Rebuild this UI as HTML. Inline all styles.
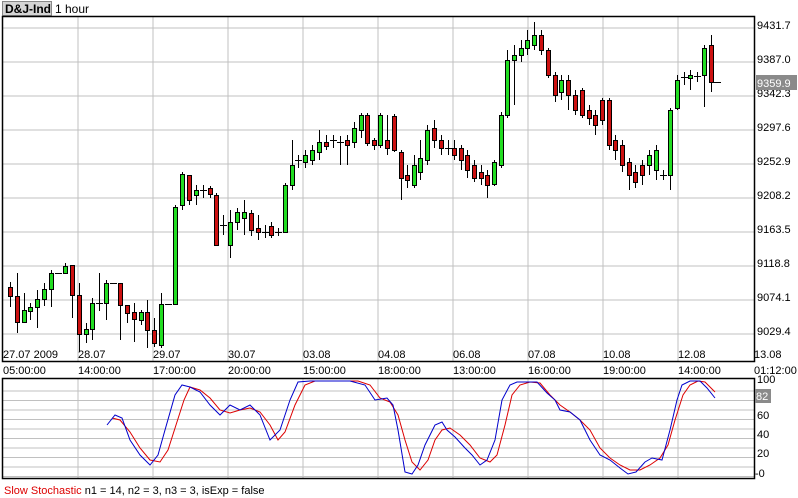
<!DOCTYPE html>
<html><head><meta charset="utf-8"><style>
html,body{margin:0;padding:0;background:#fff;width:798px;height:498px;overflow:hidden;font-family:"Liberation Sans",sans-serif}
svg{position:absolute;left:0;top:0}
</style></head><body>
<svg id="s" width="798" height="498" xmlns="http://www.w3.org/2000/svg" font-family="Liberation Sans, sans-serif" font-size="11"></svg>
<script>
var s=document.getElementById('s');var h='';
h+='<rect x="2.5" y="1.5" width="49" height="14" fill="#d4d4d4" stroke="#888"/>';
h+='<text x="5" y="13" font-weight="bold" font-size="12">D&amp;J-Ind</text><text x="55" y="13" font-size="12">1 hour</text>';
for(var k=0;k<10;k++){var y=28+34*k;h+='<line x1="3" x2="754" y1="'+y+'" y2="'+y+'" stroke="#c0c0c0"/>';}
var vx=[78,153,228,303,378,453,528,603,678];
vx.forEach(function(x){h+='<line x1="'+x+'" x2="'+x+'" y1="17" y2="362" stroke="#c0c0c0"/>';});
var pl=['9431.7','9387.0','9342.3','9297.6','9252.9','9208.2','9163.5','9118.8','9074.1','9029.4'];
pl.forEach(function(t,i){h+='<text x="757" y="'+(29+34*i)+'">'+t+'</text>';});
var dl=['27.07 2009','28.07','29.07','30.07','03.08','04.08','06.08','07.08','10.08','12.08','13.08'];
var dx=[3,78,153,228,303,378,453,528,603,678,754];
dl.forEach(function(t,i){h+='<text x="'+dx[i]+'" y="358">'+t+'</text>';});
var tl=['05:00:00','14:00:00','17:00:00','20:00:00','15:00:00','18:00:00','13:00:00','16:00:00','19:00:00','14:00:00','01:12:00'];
tl.forEach(function(t,i){h+='<text x="'+dx[i]+'" y="374">'+t+'</text>';});
var c=[[10,287,296,282,307,'r'],[17,296,322,273,333,'r'],[24,310,322,293,320,'g'],[30,307,311,303,320,'g'],[37,299,307,290,328,'g'],[44,289,299,283,306,'g'],[51,273,289,270,307,'g'],[58,273,273,273,273,'d'],[65,266,273,263,268,'g'],[72,265,295,265,318,'r'],[79,295,334,283,352,'r'],[86,329,334,323,343,'g'],[92,303,329,298,340,'g'],[99,303,303,273,311,'d'],[106,283,303,280,320,'g'],[113,283,283,283,283,'d'],[120,283,305,283,340,'r'],[127,305,313,305,323,'r'],[134,312,319,303,342,'r'],[141,312,320,310,325,'g'],[147,312,330,300,348,'r'],[154,330,343,318,347,'r'],[161,304,345,293,348,'g'],[168,304,304,304,304,'d'],[175,207,304,205,304,'g'],
[182,174,205,172,210,'g'],[189,175,200,175,205,'r'],[196,190,195,185,205,'g'],[203,190,191,185,198,'d'],[210,188,194,186,198,'r'],[216,195,245,193,245,'r'],[223,225,225,215,235,'d'],[230,222,245,210,258,'g'],[237,212,222,208,230,'g'],[244,212,218,200,235,'g'],[251,213,230,210,236,'r'],[258,228,232,215,240,'r'],[265,232,232,225,238,'d'],[271,226,235,222,238,'r'],[278,232,232,228,236,'d'],[285,185,232,183,232,'g'],[292,165,185,140,190,'g'],[298,160,163,155,168,'d'],[305,155,162,150,168,'g'],[312,150,160,145,165,'g'],[319,142,152,130,160,'g'],[326,142,146,135,150,'r'],[333,140,141,135,148,'d'],[340,142,143,136,165,'d'],[347,140,145,135,165,'r'],[354,128,142,122,148,'g'],[361,115,130,113,138,'g'],[367,115,143,113,146,'r'],[374,140,145,138,150,'r'],[380,115,145,113,148,'g'],[387,140,148,115,155,'r'],[394,116,150,114,152,'r'],[401,152,178,150,200,'r'],[407,175,180,165,188,'r'],[414,165,185,155,188,'g'],[420,158,172,140,180,'g'],[427,130,160,125,165,'g'],[434,128,140,120,148,'r'],[441,140,148,135,155,'r'],[448,148,148,140,155,'d'],[454,148,155,140,160,'r'],[461,148,160,145,170,'r'],[467,155,170,150,178,'r'],[474,165,178,160,182,'r'],[481,172,178,165,185,'r'],[487,175,185,170,198,'r'],[494,162,184,160,186,'g'],[501,115,165,112,168,'g'],[507,60,115,50,118,'g'],[514,55,60,45,105,'g'],[521,48,55,40,62,'g'],[527,40,48,30,55,'g'],[534,35,45,22,50,'g'],[541,35,50,30,55,'r'],[548,50,75,48,78,'r'],[555,75,95,72,102,'r'],[561,80,92,75,100,'g'],[568,80,95,75,110,'r'],[575,95,110,90,115,'r'],[582,90,115,88,118,'r'],[589,110,118,105,125,'r'],[595,115,125,110,135,'r'],[602,100,120,98,125,'r'],[609,100,145,98,150,'r'],[615,140,150,135,160,'r'],[622,145,165,140,172,'r'],[629,162,175,158,190,'r'],[635,172,182,165,188,'r'],[642,165,175,160,185,'r'],[649,155,165,150,175,'g'],[656,150,170,145,180,'g'],[663,175,175,170,180,'d'],[670,110,175,108,190,'g'],[677,80,108,75,110,'g'],[684,77,77,72,85,'d'],[690,75,78,70,90,'g'],[697,76,76,72,82,'d'],[704,48,75,45,107,'g'],[711,45,82,35,92,'r'],[717,82,82,82,82,'d']];
c.forEach(function(a){var x=a[0];
 if(a[3]<a[4])h+='<line x1="'+(x+.5)+'" x2="'+(x+.5)+'" y1="'+a[3]+'" y2="'+a[4]+'" stroke="#000"/>';
 if(a[5]=='d'){h+='<line x1="'+(x-3)+'" x2="'+(x+4)+'" y1="'+(a[1]+.5)+'" y2="'+(a[1]+.5)+'" stroke="#000"/>';}
 else h+='<rect x="'+(x-1.5)+'" y="'+(a[1]+.5)+'" width="4" height="'+Math.max(2,a[2]-a[1])+'" fill="'+(a[5]=='g'?'#22dd22':'#cc1111')+'" stroke="#000"/>';
});
h+='<rect x="2.5" y="16.5" width="752" height="345" fill="none" stroke="#000" stroke-width="1.5"/>';
h+='<rect x="756" y="75" width="41" height="15" fill="#8a8a8a"/><text x="757" y="87" fill="#fff">9359.9</text>';
for(var k=0;k<10;k++){var y=391+9.5*k;h+='<line x1="3" x2="754" y1="'+y+'" y2="'+y+'" stroke="#c0c0c0"/>';}
vx.forEach(function(x){h+='<line x1="'+x+'" x2="'+x+'" y1="379" y2="479" stroke="#c0c0c0"/>';});
h+='<rect x="2.5" y="378.5" width="752" height="100" fill="none" stroke="#000" stroke-width="1.5"/>';
h+='<text x="757" y="383">100</text><rect x="755" y="389" width="16" height="14" fill="#8a8a8a"/><text x="756" y="400" fill="#fff">82</text>';
h+='<text x="757" y="419">60</text><text x="757" y="438">40</text><text x="757" y="457">20</text><text x="755" y="477">-0</text>';
var blue=[[107,425],[115,415],[122,418],[130,440],[140,455],[150,465],[158,455],[165,430],[175,395],[182,385],[190,387],[200,392],[210,405],[220,415],[230,405],[240,410],[250,405],[260,415],[270,440],[280,430],[290,400],[298,382],[310,381],[350,381],[365,385],[375,400],[387,398],[393,405],[398,430],[405,472],[412,474],[418,465],[425,445],[435,425],[442,422],[447,430],[455,437],[465,448],[472,455],[480,465],[487,460],[495,440],[502,400],[510,385],[517,382],[537,382],[547,393],[555,400],[560,410],[570,412],[580,420],[590,440],[600,455],[610,460],[620,468],[628,474],[636,472],[645,462],[652,458],[662,460],[670,430],[677,400],[682,385],[690,381],[700,381],[707,388],[715,398]];
var red=[[112,418],[120,420],[130,432],[140,448],[150,460],[160,462],[168,450],[176,425],[184,400],[190,387],[200,390],[210,398],[220,410],[230,413],[240,410],[250,408],[260,412],[270,425],[278,440],[285,432],[295,405],[305,385],[315,381],[358,381],[370,385],[380,398],[390,402],[398,415],[405,440],[412,462],[420,470],[428,460],[435,440],[442,430],[450,428],[460,435],[470,445],[480,458],[490,462],[497,455],[505,425],[512,395],[520,385],[530,382],[540,383],[550,395],[560,405],[570,412],[580,420],[590,430],[600,448],[610,458],[620,465],[630,470],[640,470],[650,465],[660,458],[668,445],[675,420],[683,395],[690,385],[698,381],[705,382],[715,392]];
function pl2(p,col){return '<polyline fill="none" stroke="'+col+'" stroke-width="1" points="'+p.map(function(q){return q.join(',')}).join(' ')+'"/>';}
h+=pl2(red,'#dd0000')+pl2(blue,'#0000cc');
h+='<text x="4" y="494"><tspan fill="#dd0000">Slow Stochastic</tspan> n1 = 14, n2 = 3, n3 = 3, isExp = false</text>';
s.innerHTML=h;
</script>
</body></html>
